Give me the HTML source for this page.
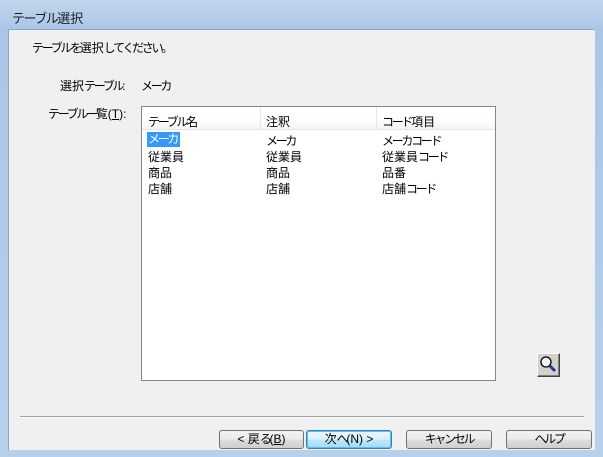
<!DOCTYPE html>
<html><head><meta charset="utf-8"><style>
*{margin:0;padding:0;box-sizing:border-box}
body{width:603px;height:457px;overflow:hidden;font-family:"Liberation Sans","Noto Sans CJK JP",sans-serif;font-size:12px;color:#000;position:relative;background:linear-gradient(#c2d6ec,#a9c6e8 30px,#b7d0ec);}
.abs{position:absolute;white-space:nowrap}
.k{letter-spacing:-2.3px}
#title{left:12px;top:8px;font-size:13px;color:#1e1e1e}
#content{left:8px;top:29px;width:587px;height:421px;background:#f0f0f0;border:1px solid #8fa7c4;border-bottom:none;border-right:none}
.list{left:141px;top:106px;width:355px;height:275px;background:#fff;border:1px solid #828790}
.hdr{left:142px;top:107px;width:353px;height:23px;background:linear-gradient(#fff,#fff 50%,#f4f5f7);border-bottom:1px solid #e5e5e5}
.div{width:1px;height:23px;top:107px;background:#e5e5e5}
.btn{height:19px;top:430px;border:1px solid #707070;border-radius:3px;background:linear-gradient(#f2f2f2,#ebebeb 50%,#dddddd 51%,#cfcfcf);text-align:center;line-height:17px;font-size:12px}
.def{border-color:#3c7fb1;box-shadow:inset 0 0 0 1px #4fc4f5;background:linear-gradient(#eaf6fd,#d9f0fc 50%,#bee6fd 51%,#a7d9f5)}
</style></head><body>
<div class="abs" id="title"><span class="k" style="letter-spacing:-1.5px">テーブル</span>選択</div>
<div class="abs" id="content"></div>
<div class="abs" style="left:32px;top:39px"><span class="k">テーブルを</span>選択<span class="k">してください。</span></div>
<div class="abs" style="left:60px;top:77px">選択<span class="k">テーブル</span>:</div>
<div class="abs k" style="left:141px;top:77px">メーカ</div>
<div class="abs" style="left:48px;top:105px"><span class="k">テーブル一</span>覧(<u>T</u>):</div>
<div class="abs list"></div>
<div class="abs hdr"></div>
<div class="abs div" style="left:260px"></div>
<div class="abs div" style="left:376px"></div>
<div class="abs" style="left:148px;top:113px"><span class="k">テーブル</span>名</div>
<div class="abs" style="left:266px;top:113px">注釈</div>
<div class="abs" style="left:382px;top:113px"><span class="k">コード</span>項目</div>
<div class="abs k" style="left:147px;top:132px;background:#3399ff;color:#fff;padding:0 3px 0 1px;line-height:15px">メーカ</div>
<div class="abs" style="left:148px;top:148px">従業員</div>
<div class="abs" style="left:148px;top:164px">商品</div>
<div class="abs" style="left:148px;top:180px">店舗</div>
<div class="abs k" style="left:266px;top:132px">メーカ</div>
<div class="abs" style="left:266px;top:148px">従業員</div>
<div class="abs" style="left:266px;top:164px">商品</div>
<div class="abs" style="left:266px;top:180px">店舗</div>
<div class="abs k" style="left:382px;top:132px">メーカコード</div>
<div class="abs" style="left:382px;top:148px">従業員<span class="k">コード</span></div>
<div class="abs" style="left:382px;top:164px">品番</div>
<div class="abs" style="left:382px;top:180px">店舗<span class="k">コード</span></div>
<div class="abs" style="left:537px;top:353px;width:23px;height:24px;border:1px solid;border-color:#fff #404040 #404040 #fff;background:#d4d0c8;box-shadow:inset -1px -1px 0 #808080">
<svg width="21" height="22" viewBox="0 0 21 22" style="position:absolute;left:0;top:0"><circle cx="8" cy="8" r="5" fill="#eef4f8" stroke="#000" stroke-width="1.3"/><line x1="12" y1="12" x2="17" y2="17" stroke="#1a3c9c" stroke-width="3"/></svg></div>
<div class="abs" style="left:20px;top:416px;width:564px;height:2px;background:#a0a0a0;border-bottom:1px solid #fff"></div>
<div class="abs btn" style="left:219px;width:85px">&lt; 戻<span class="k">る</span>(<u>B</u>)</div>
<div class="abs btn def" style="left:306px;width:86px">次<span class="k">へ</span>(N) &gt;</div>
<div class="abs btn" style="left:406px;width:86px"><span class="k">キャンセル</span></div>
<div class="abs btn" style="left:506px;width:86px"><span class="k">ヘルプ</span></div>
</body></html>
